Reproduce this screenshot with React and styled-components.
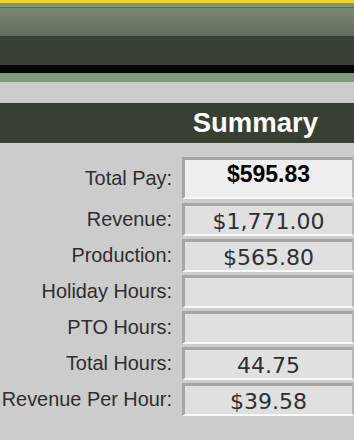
import React from "react";
import styled, { createGlobalStyle } from "styled-components";

const Global = createGlobalStyle`
  html, body { margin: 0; padding: 0; background: #cccccc; }
  body { font-family: "Liberation Sans", Arial, sans-serif; }
`;

const Page = styled.div`
  width: 354px;
  height: 440px;
  background: #cccccc;
  display: flex;
  flex-direction: column;
  overflow: hidden;
`;

const Stripe = styled.div`
  height: ${(p) => p.$h}px;
  background: ${(p) => p.$bg};
  flex-shrink: 0;
`;

const TitleBar = styled.div`
  height: 40px;
  background: #374033;
  display: flex;
  align-items: center;
  justify-content: flex-end;
  padding-right: 36px;
  color: #ffffff;
  font-family: "Liberation Sans", Arial, sans-serif;
  font-weight: bold;
  font-size: 27.5px;
  flex-shrink: 0;
`;

const Form = styled.div`
  display: flex;
  flex-direction: column;
  gap: 3px;
  padding-top: 14px;
`;

const Row = styled.div`
  display: grid;
  grid-template-columns: 182px 172px;
  align-items: center;
  margin-bottom: ${(p) => (p.$first ? "1px" : "0")};
`;

const Label = styled.div`
  text-align: right;
  padding-right: 10px;
  font-size: 19.9px;
  color: #2e2e2e;
  white-space: nowrap;
`;

const Box = styled.div`
  box-sizing: border-box;
  height: ${(p) => (p.$big ? 42 : 33)}px;
  background: ${(p) => (p.$big ? "#efefef" : "#e0e0e0")};
  border-top: 3px solid #a6a6a6;
  border-left: 3px solid #a6a6a6;
  border-right: 2px solid #b8b8b8;
  border-bottom: 2px solid #fafafa;
  display: flex;
  justify-content: center;
  align-items: ${(p) => (p.$big ? "flex-start" : "center")};
  color: #2e2e2e;
  font-family: "DejaVu Sans", Verdana, sans-serif;
  font-size: 22px;
  line-height: 1;
  padding-top: ${(p) => (p.$big ? "3px" : "3px")};
`;

const BigValue = styled.span`
  font-family: "Liberation Sans", Arial, sans-serif;
  font-weight: bold;
  font-size: 23px;
  color: #000000;
`;

const rows = [
  ["Revenue:", "$1,771.00"],
  ["Production:", "$565.80"],
  ["Holiday Hours:", ""],
  ["PTO Hours:", ""],
  ["Total Hours:", "44.75"],
  ["Revenue Per Hour:", "$39.58"],
];

export default function App() {
  return (
    <Page>
      <Global />
      <Stripe $h={3} $bg="#f7d42b" />
      <Stripe $h={4} $bg="#7f9878" />
      <Stripe $h={1} $bg="#5b6757" />
      <Stripe $h={28} $bg="linear-gradient(#7b8875, #5e6c59)" />
      <Stripe $h={29} $bg="#374033" />
      <Stripe $h={8} $bg="#050505" />
      <Stripe $h={8} $bg="#7f9a78" />
      <Stripe $h={1} $bg="#8f8f8f" />
      <Stripe $h={21} $bg="#cccccc" />
      <TitleBar>Summary</TitleBar>
      <Form>
        <Row $first>
          <Label>Total Pay:</Label>
          <Box $big>
            <BigValue>$595.83</BigValue>
          </Box>
        </Row>
        {rows.map(([l, v]) => (
          <Row key={l}>
            <Label>{l}</Label>
            <Box>{v}</Box>
          </Row>
        ))}
      </Form>
    </Page>
  );
}
